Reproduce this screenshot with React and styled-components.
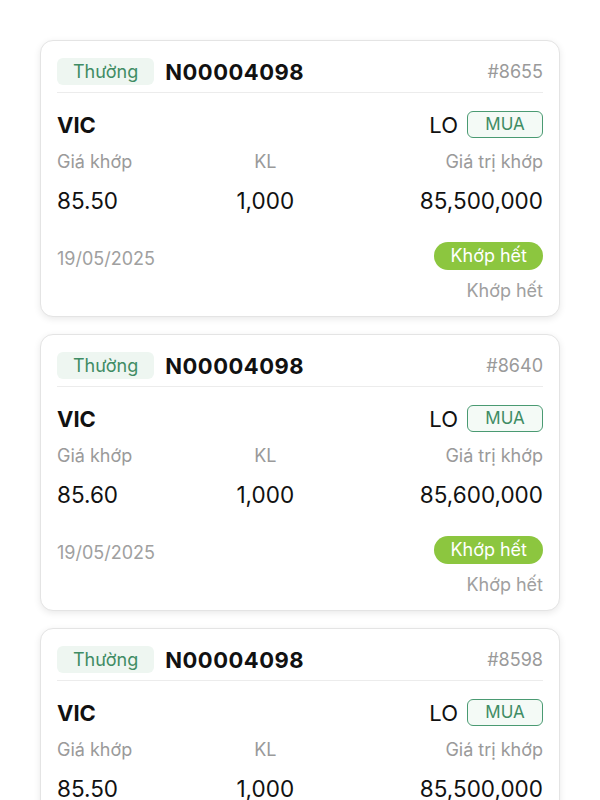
import React from "react";
import styled, { createGlobalStyle } from "styled-components";

const orders = [
  { id: "#8655", price: "85.50", qty: "1,000", value: "85,500,000" },
  { id: "#8640", price: "85.60", qty: "1,000", value: "85,600,000" },
  { id: "#8598", price: "85.50", qty: "1,000", value: "85,500,000" },
];

function OrderCard({ order }) {
  return (
    <Card>
      <Header>
        <TypeTag>Thường</TypeTag>
        <OrderNo>N00004098</OrderNo>
        <OrderId>{order.id}</OrderId>
      </Header>
      <SymbolRow>
        <Symbol>VIC</Symbol>
        <Side>
          <OrderType>LO</OrderType>
          <SideBadge>MUA</SideBadge>
        </Side>
      </SymbolRow>
      <Stats>
        <Label align="left">Giá khớp</Label>
        <Label align="center">KL</Label>
        <Label align="right">Giá trị khớp</Label>
        <Value align="left">{order.price}</Value>
        <Value align="center">{order.qty}</Value>
        <Value align="right">{order.value}</Value>
      </Stats>
      <Footer>
        <DateText>19/05/2025</DateText>
        <StatusCol>
          <StatusPill>Khớp hết</StatusPill>
          <StatusNote>Khớp hết</StatusNote>
        </StatusCol>
      </Footer>
    </Card>
  );
}

export default function App() {
  return (
    <>
      <GlobalStyle />
      <List>
        {orders.map((o) => (
          <OrderCard key={o.id} order={o} />
        ))}
      </List>
    </>
  );
}

const GlobalStyle = createGlobalStyle`
  body {
    margin: 0;
    background: #ffffff;
    font-family: Inter, "Noto Sans", sans-serif;
    color: #111111;
  }
`;

const List = styled.div`
  display: flex;
  flex-direction: column;
  gap: 17px;
  padding: 40px 40px;
  height: 800px;
  overflow: hidden;
  box-sizing: border-box;
`;

const Card = styled.div`
  flex-shrink: 0;
  background: #fff;
  border: 1px solid #e4e4e4;
  border-radius: 13px;
  box-shadow: 0 2px 7px rgba(0, 0, 0, 0.09);
  padding: 17px 16px 16px 16px;
  box-sizing: border-box;
  height: 277px;
`;

const Header = styled.div`
  display: flex;
  align-items: center;
  padding-bottom: 7px;
  border-bottom: 1px solid #ececec;
`;

const TypeTag = styled.span`
  background: #eef6f1;
  color: #3f8c64;
  font-size: 18px;
  border-radius: 6px;
  padding: 4px 16px;
  line-height: 19px;
`;

const OrderNo = styled.span`
  margin-left: 11px;
  font-size: 22px;
  font-weight: 700;
  letter-spacing: 0.5px;
`;

const OrderId = styled.span`
  margin-left: auto;
  font-size: 18px;
  color: #9a9a9a;
`;

const SymbolRow = styled.div`
  display: flex;
  justify-content: space-between;
  align-items: center;
  margin-top: 18px;
`;

const Symbol = styled.span`
  font-size: 22px;
  font-weight: 700;
`;

const Side = styled.div`
  display: flex;
  align-items: center;
  gap: 9px;
`;

const OrderType = styled.span`
  font-size: 22px;
`;

const SideBadge = styled.span`
  border: 1.5px solid #4a9a72;
  background: #f4faf6;
  color: #3f8c64;
  font-size: 17px;
  border-radius: 6px;
  padding: 2px 0;
  line-height: 21px;
  width: 74px;
  text-align: center;
`;

const Stats = styled.div`
  display: grid;
  grid-template-columns: 2fr 2fr 3fr;
  row-gap: 15px;
  margin-top: 13px;
`;

const Label = styled.span`
  text-align: ${(p) => p.align};
  font-size: 18px;
  color: #9a9a9a;
  line-height: 22px;
`;

const Value = styled.span`
  text-align: ${(p) => p.align};
  font-size: 22.5px;
  line-height: 26px;
`;

const Footer = styled.div`
  display: flex;
  justify-content: space-between;
  align-items: flex-start;
  margin-top: 28px;
`;

const DateText = styled.span`
  font-size: 18px;
  color: #a0a0a0;
  margin-top: 6px;
`;

const StatusCol = styled.div`
  display: flex;
  flex-direction: column;
  align-items: flex-end;
  gap: 10px;
`;

const StatusPill = styled.span`
  background: #8cc63f;
  color: #fff;
  font-size: 18px;
  border-radius: 14px;
  padding: 4px 16px;
  line-height: 20px;
`;

const StatusNote = styled.span`
  font-size: 18px;
  color: #a0a0a0;
`;
